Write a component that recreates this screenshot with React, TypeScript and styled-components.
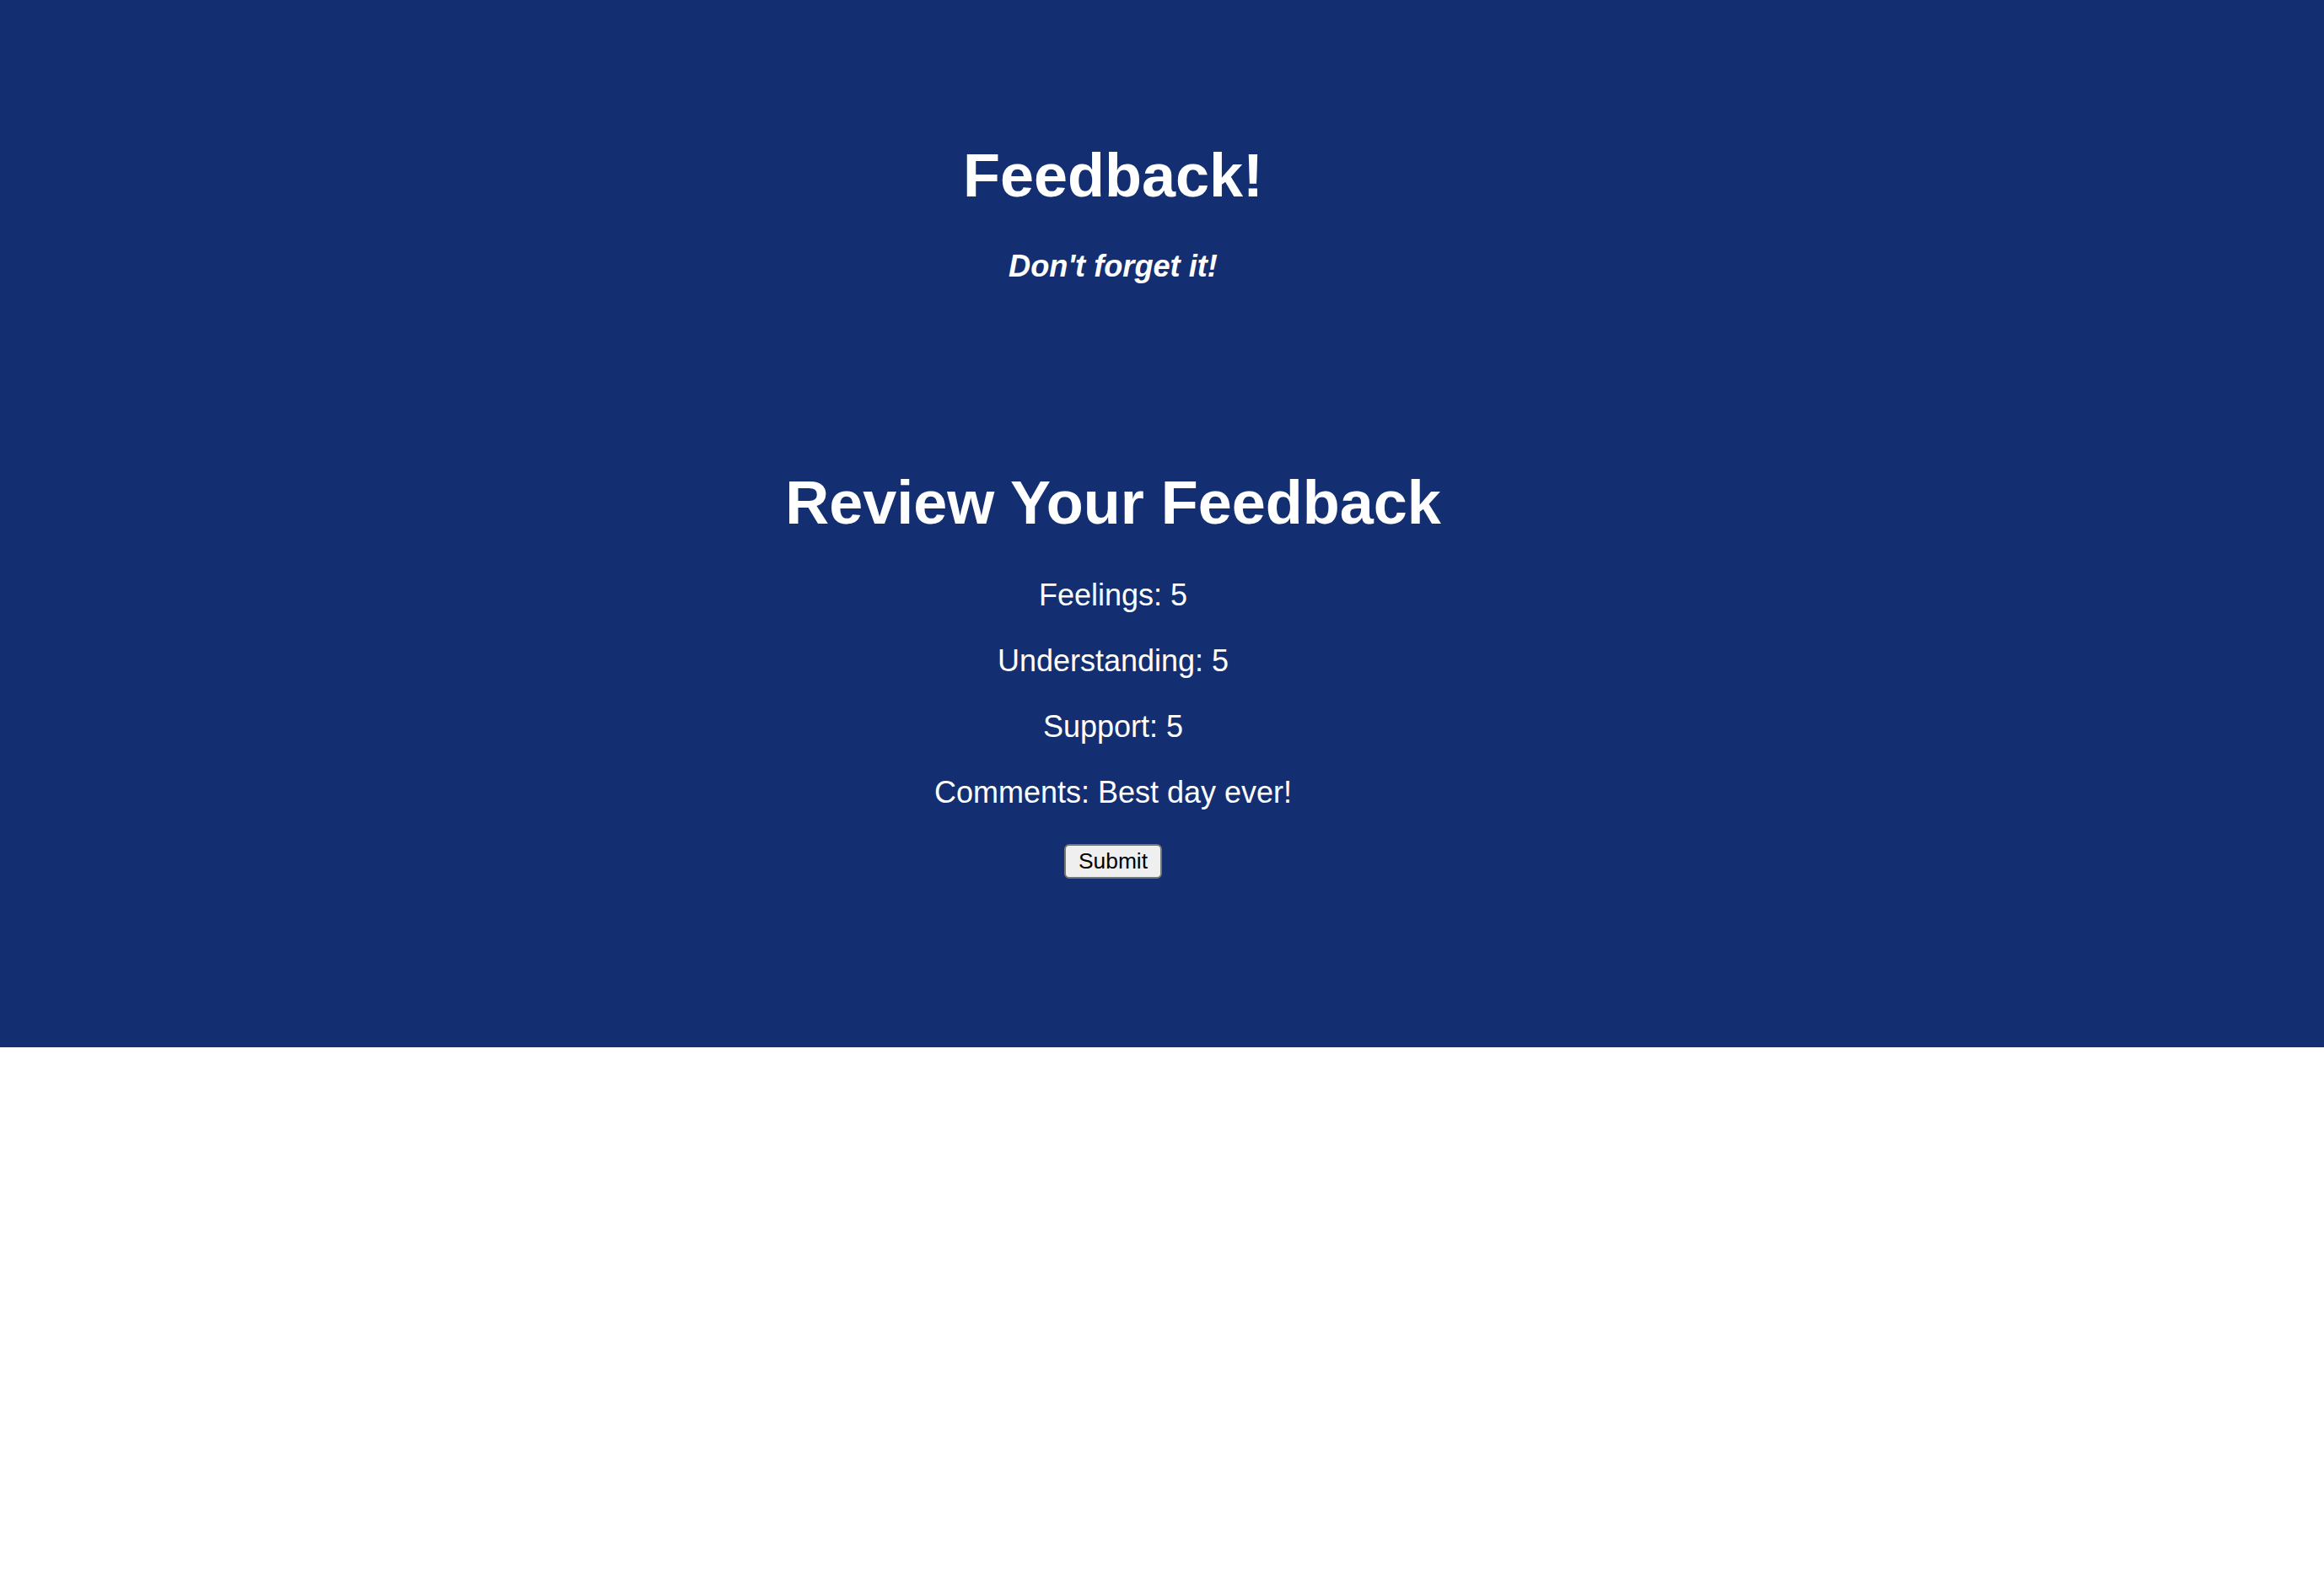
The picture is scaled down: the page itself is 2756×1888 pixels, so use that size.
import React from "react";
import styled, { createGlobalStyle } from "styled-components";

const GlobalStyle = createGlobalStyle`
  html, body {
    margin: 0;
    padding: 0;
    background: #ffffff;
  }
  body {
    font-family: "Liberation Sans", Arial, Helvetica, sans-serif;
  }
`;

const Screen = styled.div`
  background: #132f71;
  color: #ffffff;
  padding: 0 0 200px 0;
`;

const Column = styled.div`
  width: 2640px;
  display: flex;
  flex-direction: column;
  align-items: center;
  text-align: center;
`;

const Header = styled.header`
  display: flex;
  flex-direction: column;
  align-items: center;
  padding-top: 168px;
`;

const Title = styled.h1`
  margin: 0;
  font-size: 72px;
  line-height: 80px;
  font-weight: 700;
`;

const Tagline = styled.h4`
  margin: 48px 0 0 0;
  font-size: 36.2px;
  line-height: 40px;
  font-weight: 700;
  font-style: italic;
`;

const Review = styled.section`
  display: flex;
  flex-direction: column;
  align-items: center;
  margin-top: 220px;
`;

const ReviewHeading = styled.h2`
  margin: 0 0 50px 0;
  font-size: 72px;
  line-height: 80px;
  font-weight: 700;
`;

const Line = styled.p`
  margin: 0 0 38px 0;
  font-size: 36px;
  line-height: 40px;
  &:last-of-type {
    margin-bottom: 41px;
  }
`;

const SubmitButton = styled.button`
  height: 41px;
  padding: 0 15px;
  font-family: "Liberation Sans", Arial, Helvetica, sans-serif;
  font-size: 26.4px;
  line-height: 1;
  color: #000000;
  background: #efefef;
  border: 2px solid #767676;
  border-radius: 6px;
  cursor: pointer;
`;

const answers = [
  { label: "Feelings", value: "5" },
  { label: "Understanding", value: "5" },
  { label: "Support", value: "5" },
  { label: "Comments", value: "Best day ever!" },
];

export default function App() {
  return (
    <>
      <GlobalStyle />
      <Screen>
        <Column>
          <Header>
            <Title>Feedback!</Title>
            <Tagline>Don't forget it!</Tagline>
          </Header>
          <Review>
            <ReviewHeading>Review Your Feedback</ReviewHeading>
            {answers.map((a) => (
              <Line key={a.label}>
                {a.label}: {a.value}
              </Line>
            ))}
            <SubmitButton type="button">Submit</SubmitButton>
          </Review>
        </Column>
      </Screen>
    </>
  );
}
